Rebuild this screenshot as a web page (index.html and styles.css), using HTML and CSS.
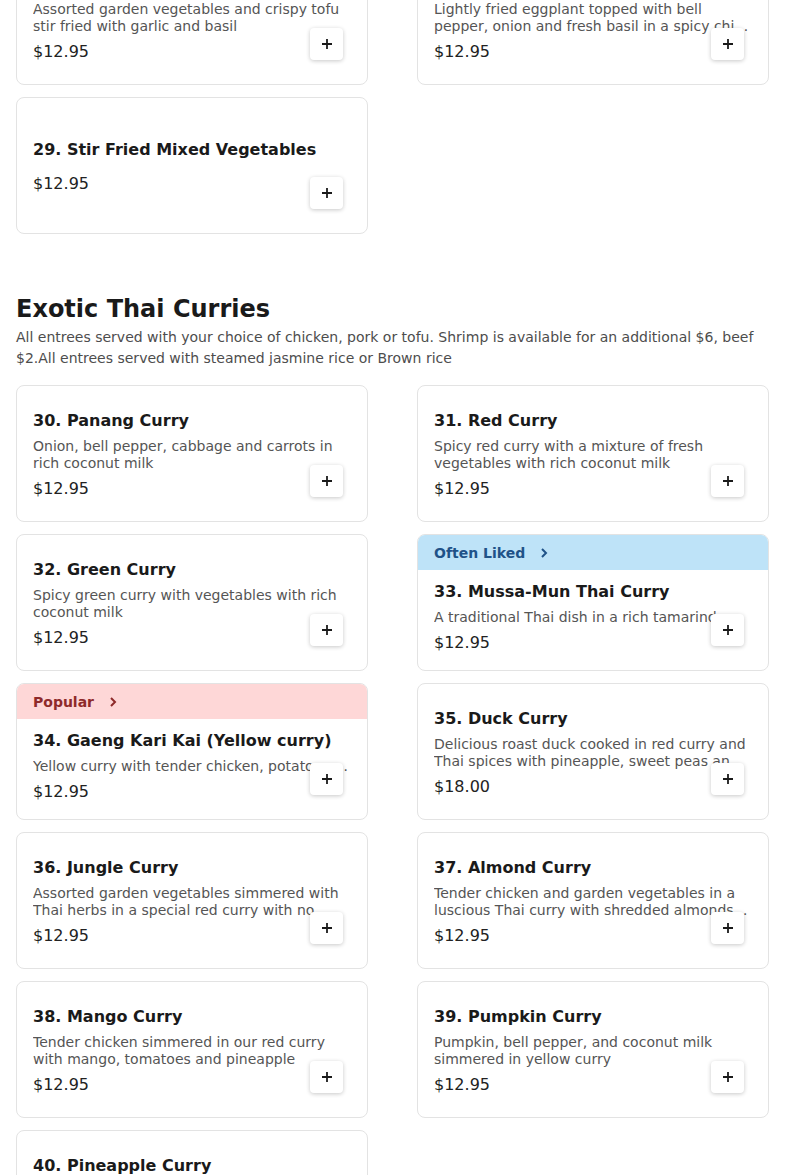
FILE: index.html
```html
<!DOCTYPE html>
<html lang="en">
<head>
<meta charset="utf-8">
<title>Menu</title>
<link rel="stylesheet" href="styles.css">
</head>
<body>
<div class="page">
  <div class="grid first">
    <div class="card">
      <div class="body">
        <div class="title">27. Tofu Basil</div>
        <div class="desc">Assorted garden vegetables and crispy tofu stir fried with garlic and basil</div>
        <div class="price">$12.95</div>
      </div>
      <button class="add"><svg viewBox="0 0 12 12" width="12" height="12"><path d="M6 1v10M1 6h10" stroke="#1a1a1a" stroke-width="1.8"/></svg></button>
    </div>
    <div class="card">
      <div class="body">
        <div class="title">28. Spicy Eggplant</div>
        <div class="desc">Lightly fried eggplant topped with bell pepper, onion and fresh basil in a spicy chili sauce</div>
        <div class="price">$12.95</div>
      </div>
      <button class="add"><svg viewBox="0 0 12 12" width="12" height="12"><path d="M6 1v10M1 6h10" stroke="#1a1a1a" stroke-width="1.8"/></svg></button>
    </div>
    <div class="card">
      <div class="body">
        <div class="title">29. Stir Fried Mixed Vegetables</div>
        <div class="price solo">$12.95</div>
      </div>
      <button class="add"><svg viewBox="0 0 12 12" width="12" height="12"><path d="M6 1v10M1 6h10" stroke="#1a1a1a" stroke-width="1.8"/></svg></button>
    </div>
  </div>

  <section class="section">
    <h2 class="heading">Exotic Thai Curries</h2>
    <p class="intro">All entrees served with your choice of chicken, pork or tofu. Shrimp is available for an additional $6, beef $2.All entrees served with steamed jasmine rice or Brown rice</p>
    <div class="grid">
      <div class="card">
        <div class="body">
          <div class="title">30. Panang Curry</div>
          <div class="desc">Onion, bell pepper, cabbage and carrots in rich coconut milk</div>
          <div class="price">$12.95</div>
        </div>
        <button class="add"><svg viewBox="0 0 12 12" width="12" height="12"><path d="M6 1v10M1 6h10" stroke="#1a1a1a" stroke-width="1.8"/></svg></button>
      </div>
      <div class="card">
        <div class="body">
          <div class="title">31. Red Curry</div>
          <div class="desc">Spicy red curry with a mixture of fresh vegetables with rich coconut milk</div>
          <div class="price">$12.95</div>
        </div>
        <button class="add"><svg viewBox="0 0 12 12" width="12" height="12"><path d="M6 1v10M1 6h10" stroke="#1a1a1a" stroke-width="1.8"/></svg></button>
      </div>
      <div class="card">
        <div class="body">
          <div class="title">32. Green Curry</div>
          <div class="desc">Spicy green curry with vegetables with rich coconut milk</div>
          <div class="price">$12.95</div>
        </div>
        <button class="add"><svg viewBox="0 0 12 12" width="12" height="12"><path d="M6 1v10M1 6h10" stroke="#1a1a1a" stroke-width="1.8"/></svg></button>
      </div>
      <div class="card">
        <div class="band liked">Often Liked <svg class="chev" viewBox="0 0 10 12" width="10" height="12"><path d="M3 2l4 4-4 4" fill="none" stroke="currentColor" stroke-width="2"/></svg></div>
        <div class="body short">
          <div class="title">33. Mussa-Mun Thai Curry</div>
          <div class="desc one">A traditional Thai dish in a rich tamarind.</div>
          <div class="price">$12.95</div>
        </div>
        <button class="add"><svg viewBox="0 0 12 12" width="12" height="12"><path d="M6 1v10M1 6h10" stroke="#1a1a1a" stroke-width="1.8"/></svg></button>
      </div>
      <div class="card">
        <div class="band popular">Popular <svg class="chev" viewBox="0 0 10 12" width="10" height="12"><path d="M3 2l4 4-4 4" fill="none" stroke="currentColor" stroke-width="2"/></svg></div>
        <div class="body short">
          <div class="title">34. Gaeng Kari Kai (Yellow curry)</div>
          <div class="desc one">Yellow curry with tender chicken, potatoes, onions and carrots</div>
          <div class="price">$12.95</div>
        </div>
        <button class="add"><svg viewBox="0 0 12 12" width="12" height="12"><path d="M6 1v10M1 6h10" stroke="#1a1a1a" stroke-width="1.8"/></svg></button>
      </div>
      <div class="card">
        <div class="body">
          <div class="title">35. Duck Curry</div>
          <div class="desc">Delicious roast duck cooked in red curry and Thai spices with pineapple, sweet peas and tomatoes</div>
          <div class="price">$18.00</div>
        </div>
        <button class="add"><svg viewBox="0 0 12 12" width="12" height="12"><path d="M6 1v10M1 6h10" stroke="#1a1a1a" stroke-width="1.8"/></svg></button>
      </div>
      <div class="card">
        <div class="body">
          <div class="title">36. Jungle Curry</div>
          <div class="desc">Assorted garden vegetables simmered with Thai herbs in a special red curry with no coconut milk</div>
          <div class="price">$12.95</div>
        </div>
        <button class="add"><svg viewBox="0 0 12 12" width="12" height="12"><path d="M6 1v10M1 6h10" stroke="#1a1a1a" stroke-width="1.8"/></svg></button>
      </div>
      <div class="card">
        <div class="body">
          <div class="title">37. Almond Curry</div>
          <div class="desc">Tender chicken and garden vegetables in a luscious Thai curry with shredded almonds and coconut milk</div>
          <div class="price">$12.95</div>
        </div>
        <button class="add"><svg viewBox="0 0 12 12" width="12" height="12"><path d="M6 1v10M1 6h10" stroke="#1a1a1a" stroke-width="1.8"/></svg></button>
      </div>
      <div class="card">
        <div class="body">
          <div class="title">38. Mango Curry</div>
          <div class="desc">Tender chicken simmered in our red curry with mango, tomatoes and pineapple</div>
          <div class="price">$12.95</div>
        </div>
        <button class="add"><svg viewBox="0 0 12 12" width="12" height="12"><path d="M6 1v10M1 6h10" stroke="#1a1a1a" stroke-width="1.8"/></svg></button>
      </div>
      <div class="card">
        <div class="body">
          <div class="title">39. Pumpkin Curry</div>
          <div class="desc">Pumpkin, bell pepper, and coconut milk simmered in yellow curry</div>
          <div class="price">$12.95</div>
        </div>
        <button class="add"><svg viewBox="0 0 12 12" width="12" height="12"><path d="M6 1v10M1 6h10" stroke="#1a1a1a" stroke-width="1.8"/></svg></button>
      </div>
      <div class="card">
        <div class="body">
          <div class="title">40. Pineapple Curry</div>
          <div class="desc">Tender chicken simmered in red curry with pineapple, bell pepper and basil</div>
          <div class="price">$12.95</div>
        </div>
        <button class="add"><svg viewBox="0 0 12 12" width="12" height="12"><path d="M6 1v10M1 6h10" stroke="#1a1a1a" stroke-width="1.8"/></svg></button>
      </div>
    </div>
  </section>
</div>
</body>
</html>
```

FILE: styles.css
```css
* { box-sizing: border-box; }
html, body {
  margin: 0;
  padding: 0;
  background: #ffffff;
  font-family: "DejaVu Sans", sans-serif;
  color: #1a1a1a;
}
.page {
  padding: 0 16px;
  overflow: hidden;
}
.grid {
  display: grid;
  grid-template-columns: 1fr 1fr;
  column-gap: 49px;
  row-gap: 12px;
}
.grid.first {
  margin-top: -52px;
}
.card {
  position: relative;
  height: 137px;
  border: 1px solid #e3e3e3;
  border-radius: 8px;
  overflow: hidden;
  display: flex;
  flex-direction: column;
  background: #fff;
}
.band {
  height: 35px;
  flex: none;
  display: flex;
  align-items: center;
  gap: 14px;
  padding: 0 16px;
  font-size: 14px;
  font-weight: bold;
}
.band.liked {
  background: #bee3f8;
  color: #1f5288;
}
.band.popular {
  background: #fed7d7;
  color: #8e2a2a;
}
.chev { display: block; }
.body {
  flex: 1;
  display: flex;
  flex-direction: column;
  justify-content: center;
  padding: 2px 16px 0;
  min-height: 0;
}
.body.short {
  padding-top: 0;
  padding-bottom: 6px;
}
.title {
  font-size: 16px;
  font-weight: bold;
  line-height: 24px;
  color: #1a1a1a;
  white-space: nowrap;
}
.desc {
  margin-top: 5px;
  font-size: 14px;
  line-height: 17px;
  color: #555555;
  display: -webkit-box;
  -webkit-box-orient: vertical;
  -webkit-line-clamp: 2;
  overflow: hidden;
}
.desc.one {
  display: block;
  white-space: nowrap;
  text-overflow: ellipsis;
}
.price {
  margin-top: 5px;
  font-size: 16px;
  line-height: 24px;
  color: #222222;
}
.price.solo {
  margin-top: 10px;
}
.add {
  position: absolute;
  right: 24px;
  bottom: 24px;
  width: 33px;
  height: 32px;
  border: none;
  border-radius: 4px;
  background: #ffffff;
  box-shadow: 0 1px 4px rgba(0, 0, 0, 0.22);
  display: flex;
  align-items: center;
  justify-content: center;
  padding: 0;
}
.add svg { display: block; }
.section {
  margin-top: 59px;
}
.heading {
  margin: 0;
  font-size: 24px;
  line-height: 32px;
  font-weight: bold;
  color: #1a1a1a;
}
.intro {
  margin: 2px 0 16px;
  font-size: 14px;
  line-height: 21px;
  color: #4d4d4d;
}
```
